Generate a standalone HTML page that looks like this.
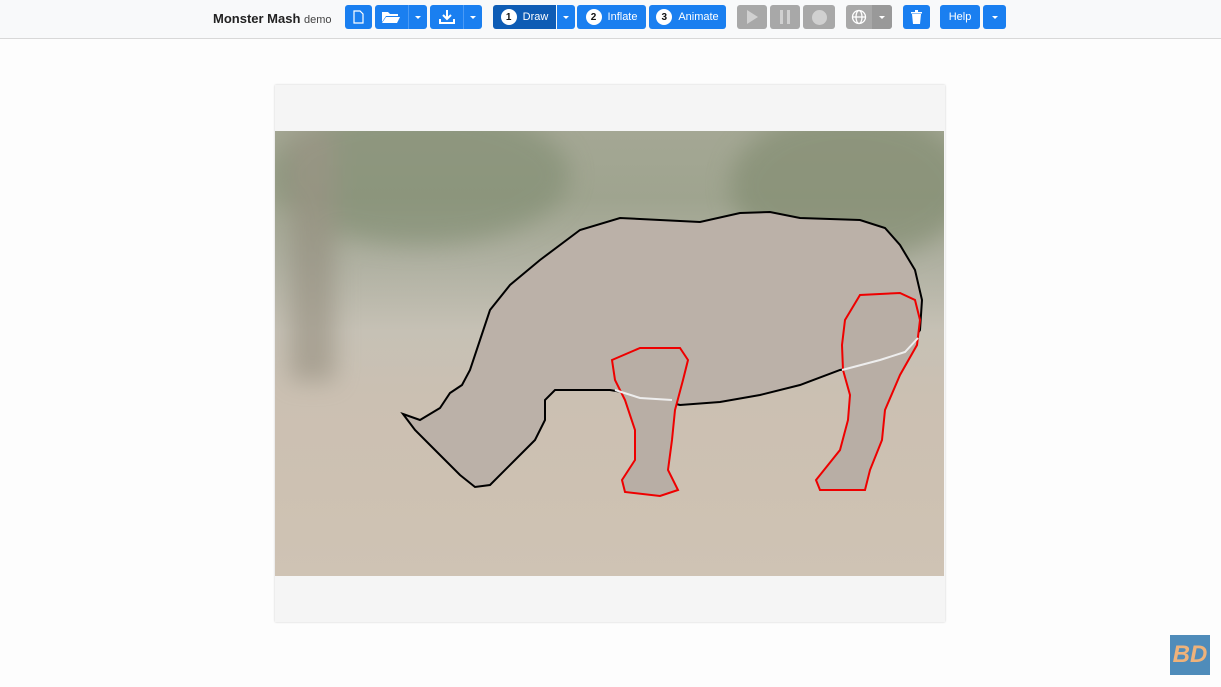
<!DOCTYPE html>
<html><head><meta charset="utf-8"><style>
*{box-sizing:border-box;margin:0;padding:0}
body{width:1221px;height:687px;background:#fdfdfd;font-family:"Liberation Sans",sans-serif;position:relative;overflow:hidden}
.bar{position:absolute;left:0;top:0;width:1221px;height:39px;background:#f8f9fa;border-bottom:1px solid #d8d8d8}
.title{position:absolute;left:213px;top:11px;font-size:13px;font-weight:bold;color:#222}
.title span{font-weight:normal;font-size:11px;color:#444}
.b{position:absolute;top:5px;height:24px;background:#1a7ff0;border-radius:3px;color:#fff;font-size:11px;display:flex;align-items:center;justify-content:center}
.d{background:#0e5cb5}
.g{background:#a8a8a8}
.c{width:16px;height:16px;border-radius:50%;background:#fff;color:#111;font-weight:bold;font-size:10px;display:inline-flex;align-items:center;justify-content:center;margin-right:6px}
.car{width:0;height:0;border-left:3px solid transparent;border-right:3px solid transparent;border-top:3px solid #fff}
.canvas{position:absolute;left:275px;top:85px;width:670px;height:537px;background:#f5f5f5;box-shadow:0 0 2px #ccc}
.photo{position:absolute;left:275px;top:131px;width:669px;height:445px;background:linear-gradient(180deg,#a4a794 0%,#9fa48f 15%,#b0b1a2 30%,#c6c1b5 45%,#cbc0b2 60%,#cdc1b2 80%,#cfc3b4 100%)}
.bd{position:absolute;left:1170px;top:635px;width:40px;height:40px;background:#4f8cba;color:#eeb27a;font:italic bold 24px "Liberation Sans",sans-serif;display:flex;align-items:center;justify-content:center}
</style></head><body>
<div class="bar">
<div class="title">Monster Mash <span>demo</span></div>
<div class="b" style="left:345px;width:27px"><svg width="11" height="14" viewBox="0 0 11 14"><path d="M1 1h6l3 3v9H1z" fill="none" stroke="#fff" stroke-width="1.2"/></svg></div>
<div class="b" style="left:375px;width:52px;justify-content:flex-start;padding-left:6px"><svg width="20" height="14" viewBox="0 0 20 14"><path d="M1 2h6l2 2h8v2H5L1 12z M5 7h14l-3 6H1z" fill="#fff"/></svg><span style="position:absolute;left:33px;top:0;height:24px;border-left:1px solid #4a9af5"></span><span class="car" style="position:absolute;left:40px;top:11px"></span></div>
<div class="b" style="left:430px;width:52px;justify-content:flex-start;padding-left:8px"><svg width="18" height="16" viewBox="0 0 18 16"><path d="M9 1v9M5 6l4 4 4-4M2 10v4h14v-4" fill="none" stroke="#fff" stroke-width="2"/></svg><span style="position:absolute;left:33px;top:0;height:24px;border-left:1px solid #4a9af5"></span><span class="car" style="position:absolute;left:40px;top:11px"></span></div>
<div class="b d" style="left:493px;width:63px;border-radius:3px 0 0 3px"><span class="c">1</span>Draw</div>
<div class="b" style="left:557px;width:18px;border-radius:0 3px 3px 0"><span class="car"></span></div>
<div class="b" style="left:577px;width:69px"><span class="c">2</span>Inflate</div>
<div class="b" style="left:649px;width:77px"><span class="c">3</span>Animate</div>
<div class="b g" style="left:737px;width:30px"><svg width="12" height="14"><path d="M1 0l11 7-11 7z" fill="#d0d0d0"/></svg></div>
<div class="b g" style="left:770px;width:30px"><svg width="12" height="14"><path d="M1 0h3v14H1zM8 0h3v14H8z" fill="#d0d0d0"/></svg></div>
<div class="b g" style="left:803px;width:32px"><svg width="15" height="15"><circle cx="7.5" cy="7.5" r="7.5" fill="#d0d0d0"/></svg></div>
<div class="b g" style="left:846px;width:46px;justify-content:flex-start;padding-left:5px"><svg width="16" height="16" viewBox="0 0 16 16" fill="none" stroke="#fff" stroke-width="1.3"><circle cx="8" cy="8" r="6.5"/><ellipse cx="8" cy="8" rx="3" ry="6.5"/><path d="M1.5 8h13"/></svg><span style="position:absolute;left:26px;top:0;height:24px;width:20px;background:#999;border-radius:0 3px 3px 0;display:flex;align-items:center;justify-content:center"><span class="car"></span></span></div>
<div class="b" style="left:903px;width:27px"><svg width="11" height="14" viewBox="0 0 11 14"><path d="M0 2h11v1.5H0zM4 0h3v2H4zM1 4h9l-1 10H2z" fill="#fff"/></svg></div>
<div class="b" style="left:940px;width:40px">Help</div>
<div class="b" style="left:983px;width:23px"><span class="car"></span></div>
</div>
<div class="canvas"></div>
<div class="photo"></div>
<svg style="position:absolute;left:0;top:0" width="1221" height="687">
<defs><clipPath id="cp"><rect x="275" y="131" width="669" height="445"/></clipPath><filter id="bl"><feGaussianBlur stdDeviation="12"/></filter></defs>
<g clip-path="url(#cp)" opacity="0.55" filter="url(#bl)">
<ellipse cx="420" cy="175" rx="150" ry="70" fill="#7d8a6e"/>
<ellipse cx="850" cy="185" rx="120" ry="75" fill="#7c876a"/>
<rect x="290" y="131" width="45" height="250" fill="#8f8878"/>
</g>
<path d="M403 414 L420 420 440 408 450 393 462 385 470 370 480 340 490 310 510 285 540 260 580 230 620 218 660 220 700 222 740 213 770 212 800 218 860 220 885 228 900 245 915 270 922 300 920 330 910 345 880 362 840 370 800 385 760 395 720 402 680 405 640 395 610 390 580 390 555 390 545 400 545 420 535 440 515 460 490 485 475 487 460 475 445 460 430 445 415 430Z" fill="#bbb1a8" stroke="#000" stroke-width="2"/>
<path d="M612 360 L640 348 680 348 688 360 683 380 675 410 672 440 668 470 678 490 660 496 625 492 622 480 635 460 635 430 625 400 615 380Z" fill="#b8aea5" stroke="#e00" stroke-width="2"/>
<path d="M845 320 L860 295 900 293 915 300 920 320 917 345 900 375 885 410 882 440 870 470 865 490 820 490 816 480 840 450 848 420 850 395 843 370 842 345Z" fill="#b8aea5" stroke="#e00" stroke-width="2"/>
<path d="M615 390 L640 398 672 400" fill="none" stroke="#eee" stroke-width="2"/>
<path d="M842 370 L880 360 905 352 918 338" fill="none" stroke="#eee" stroke-width="2"/>
</svg>
<div class="bd">BD</div>
</body></html>
